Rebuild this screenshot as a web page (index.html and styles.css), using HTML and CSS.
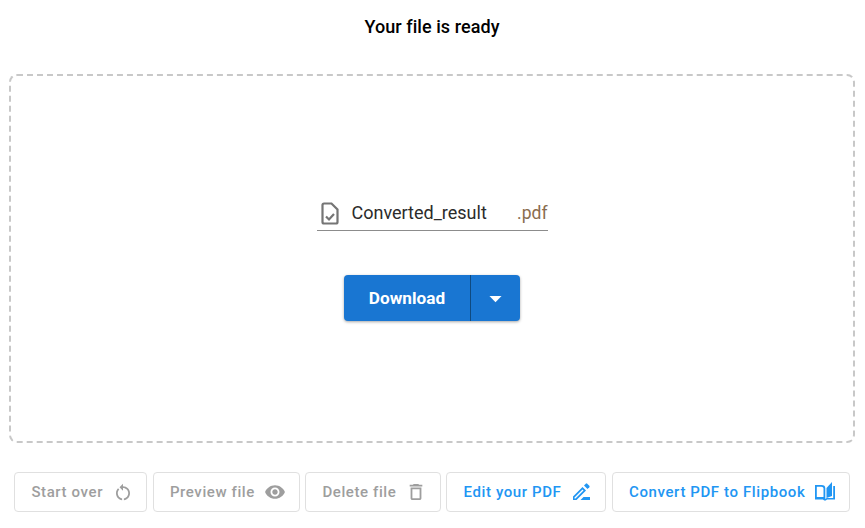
FILE: index.html
```html
<!DOCTYPE html>
<html lang="en">
<head>
<meta charset="utf-8">
<title>Your file is ready</title>
<link rel="stylesheet" href="styles.css">
</head>
<body>
<div class="page">
  <h1 class="title">Your file is ready</h1>
  <section class="dropzone">
    <div class="filename">
      <svg class="file-icon" viewBox="0 0 24 24" width="24" height="24"><path fill="none" stroke="#757575" stroke-width="2.200" d="M13.500 2.500H6a1.500 1.500 0 0 0-1.500 1.500v17a1.500 1.500 0 0 0 1.500 1.500h12a1.500 1.500 0 0 0 1.500-1.500V8.500z"/><path fill="none" stroke="#757575" stroke-width="2.200" d="M8 15.500l3 3 5-5.500"/></svg>
      <span class="name">Converted_result</span>
      <span class="ext">.pdf</span>
    </div>
    <div class="split">
      <button class="split-main">Download</button>
      <button class="split-arrow" aria-label="More"><svg viewBox="0 0 24 24" width="29" height="29"><path fill="#fff" d="M7 10l5 5 5-5z"/></svg></button>
    </div>
  </section>
  <div class="actions">
    <button class="action muted a1"><span>Start over</span>
      <svg viewBox="-1.700 -2.200 27.400 27.400"><path fill="#9e9e9e" d="M12 5V2L8 6l4 4V7c3.310 0 6 2.690 6 6 0 2.970-2.170 5.430-5 5.910v2.020c3.950-.49 7-3.850 7-7.930 0-4.420-3.580-8-8-8zm-6 8c0-1.650.67-3.150 1.760-4.240L6.340 7.340C4.900 8.790 4 10.790 4 13c0 4.080 3.050 7.440 7 7.930v-2.020c-2.830-.48-5-2.940-5-5.910z"/></svg>
    </button>
    <button class="action muted a2"><span>Preview file</span>
      <svg viewBox="-1.300 -1.300 26.600 26.600"><path fill="#9e9e9e" d="M12 4.500C7 4.500 2.730 7.610 1 12c1.730 4.390 6 7.500 11 7.500s9.270-3.110 11-7.500c-1.730-4.390-6-7.500-11-7.500zM12 17c-2.760 0-5-2.240-5-5s2.240-5 5-5 5 2.240 5 5-2.240 5-5 5zm0-8c-1.660 0-3 1.340-3 3s1.340 3 3 3 3-1.340 3-3-1.340-3-3-3z"/></svg>
    </button>
    <button class="action muted a3"><span>Delete file</span>
      <svg viewBox="-1.300 -1.300 26.600 26.600"><path fill="#9e9e9e" d="M16 9v10H8V9h8m-1.500-6h-5l-1 1H5v2h14V4h-3.500l-1-1zM18 7H6v12c0 1.100.9 2 2 2h8c1.100 0 2-.9 2-2V7z"/></svg>
    </button>
    <button class="action link a4"><span>Edit your PDF</span>
      <svg viewBox="0 0 24 24"><path fill="#2196f3" d="M4 16.500V20h3.500L17 10.500 13.500 7zM5.500 18.500v-1L13.500 9.500l1 1-8 8z"/><path fill="#2196f3" d="M15 5.500l3.500 3.500 1.800-1.800a1 1 0 0 0 0-1.400l-2.100-2.100a1 1 0 0 0-1.400 0z"/><path fill="#2196f3" d="M11.500 20l3-3H21v3z"/></svg>
    </button>
    <button class="action link a5"><span>Convert PDF to Flipbook</span>
      <svg viewBox="0 0 24 24"><path fill="none" stroke="#2196f3" stroke-width="1.800" d="M2.900 5.900h5.500c1.600 0 3 .8 3 2.400v9.700H2.900zM21.100 5.900v12.100"/><path fill="#2196f3" d="M13.500 8l5.500-6v14l-5.500 2z"/><path fill="none" stroke="#2196f3" stroke-width="1.600" d="M2 18.700h8l1.500 1h1l1.500-1h8"/></svg>
    </button>
  </div>
</div>
</body>
</html>
```
FILE: styles.css
```css
* { box-sizing: border-box; }
html, body { margin: 0; padding: 0; background: #fff; }
body { font-family: Roboto, "Liberation Sans", sans-serif; width: 865px; height: 528px; overflow: hidden; }
.page { display: flex; flex-direction: column; align-items: stretch; padding: 0 10px 0 9px; }
.title {
  margin: 17px 0 0;
  height: 20px;
  font-size: 18px;
  line-height: 20px;
  font-weight: 500;
  letter-spacing: .06px;
  text-align: center;
  color: #000;
}
.dropzone {
  margin-top: 37px;
  height: 369px;
  border: 2px dashed #c8c8c8;
  border-radius: 8px;
  display: flex;
  flex-direction: column;
  align-items: center;
  padding-top: 122px;
}
.filename {
  width: 231px;
  height: 33px;
  display: flex;
  align-items: center;
  border-bottom: 1px solid #8c8c8c;
  padding: 0 0 2px 1px;
  font-size: 17.5px;
  color: #2b2b2b;
}
.file-icon { flex: none; margin-right: 10px; }
.name { flex: 1; font-size: 18px; padding-bottom: 2px; }
.ext { color: #8a6d4f; padding-bottom: 1px; }
.split {
  margin-top: 44px;
  width: 176px;
  height: 46px;
  display: flex;
  background: #1976d2;
  border-radius: 4px;
  box-shadow: 0 1px 3px rgba(0,0,0,.35);
}
.split button { border: 0; background: transparent; color: #fff; font-family: inherit; padding: 0; }
.split-main {
  width: 127px;
  font-size: 17.2px;
  font-weight: 700;
  border-right: 1px solid #0f4a80 !important;
}
.split-arrow { flex: 1; display: flex; align-items: center; justify-content: center; }
.actions {
  margin-top: 29px;
  margin-left: 5px;
  display: flex;
  gap: 5.5px;
}
.action {
  height: 40px;
  display: flex;
  align-items: center;
  justify-content: flex-start;
  gap: 8px;
  padding: 0 0 0 16.4px;
  background: #fff;
  border: 1px solid #e0e0e0;
  border-radius: 4px;
  font-family: inherit;
  font-size: 15px;
  font-weight: 500;
  letter-spacing: .6px;
}
.action svg { width: 24px; height: 24px; flex: none; }
.muted { color: #9e9e9e; }
.link { color: #2196f3; }
.a1 { width: 133px; }
.a2 { width: 147px; }
.a3 { width: 135.7px; }
.a4 { width: 160px; }
.a5 { width: 238.3px; }
```
